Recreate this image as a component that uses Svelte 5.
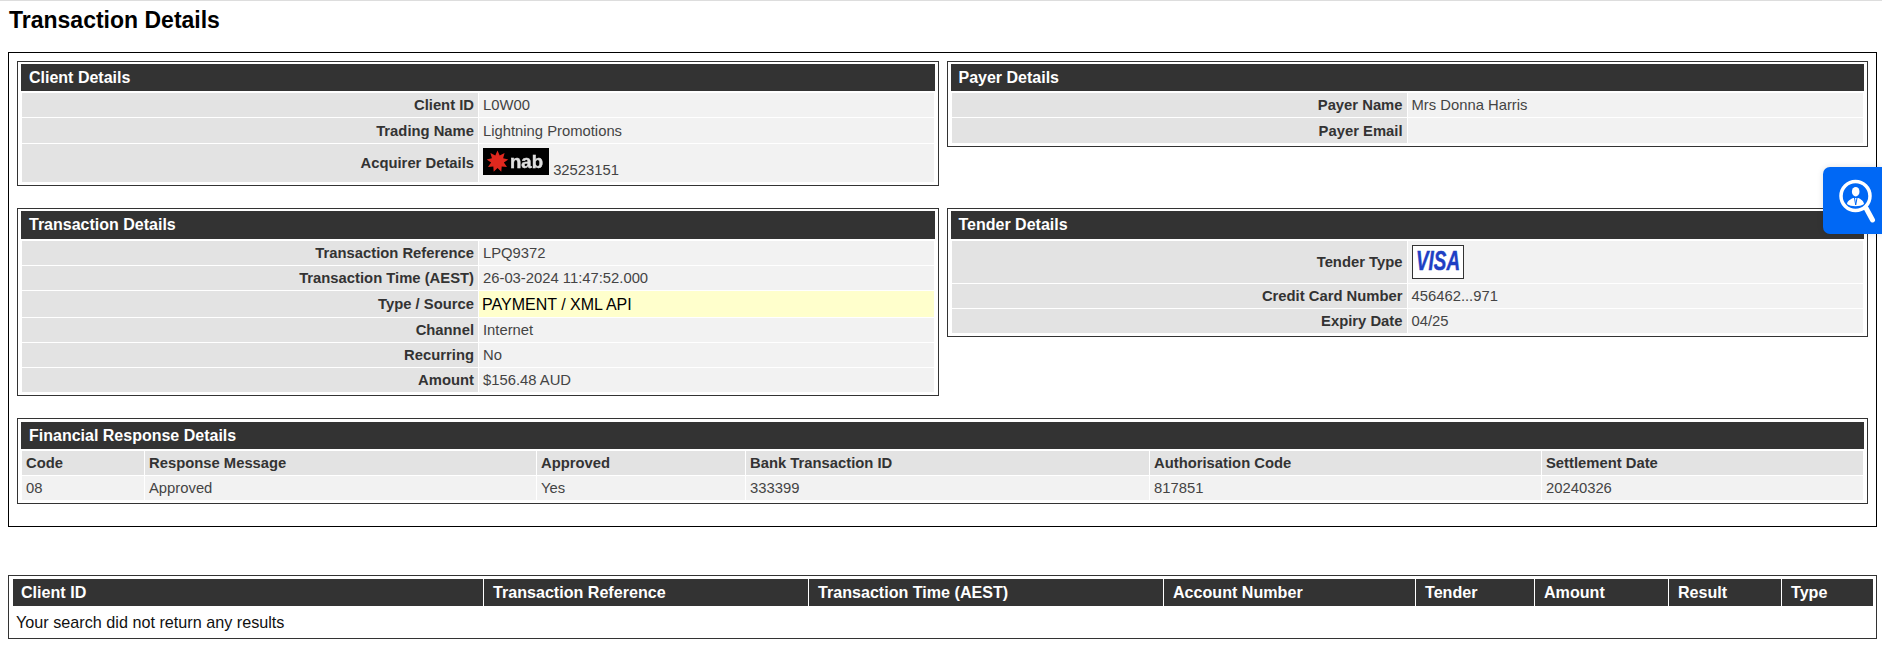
<script lang="ts">
  const client = [
    ['Client ID', 'L0W00'],
    ['Trading Name', 'Lightning Promotions']
  ];
  const payer = [
    ['Payer Name', 'Mrs Donna Harris'],
    ['Payer Email', '']
  ];
  const txn = [
    ['Transaction Reference', 'LPQ9372'],
    ['Transaction Time (AEST)', '26-03-2024 11:47:52.000'],
    ['Type / Source', 'PAYMENT / XML API', 'hl'],
    ['Channel', 'Internet'],
    ['Recurring', 'No'],
    ['Amount', '$156.48 AUD']
  ];
  const tender = [
    ['Credit Card Number', '456462...971'],
    ['Expiry Date', '04/25']
  ];
  const fin = [
    ['Code', '08', 122],
    ['Response Message', 'Approved', 391],
    ['Approved', 'Yes', 208],
    ['Bank Transaction ID', '333399', 403],
    ['Authorisation Code', '817851', 391],
    ['Settlement Date', '20240326', 0]
  ];
  const cols = [
    ['Client ID', 470],
    ['Transaction Reference', 325],
    ['Transaction Time (AEST)', 355],
    ['Account Number', 252],
    ['Tender', 119],
    ['Amount', 134],
    ['Result', 113],
    ['Type', 0]
  ];

  // red nab star
  function star(cx: number, cy: number, R: number, r: number, n: number) {
    const pts = [];
    for (let i = 0; i < n * 2; i++) {
      const a = (Math.PI * i) / n - Math.PI / 2;
      const d = i % 2 ? r : R;
      pts.push((cx + d * Math.cos(a)).toFixed(1) + ',' + (cy + d * Math.sin(a)).toFixed(1));
    }
    return pts.join(' ');
  }
</script>

<div class="page">
  <h1>Transaction Details</h1>

  <div class="outer">
    <div class="split">
      <section class="panel">
        <h2>Client Details</h2>
        <table class="kv pair">
          <tbody>
            {#each client as r}
              <tr><th>{r[0]}</th><td>{r[1]}</td></tr>
            {/each}
            <tr>
              <th class="acq">Acquirer Details</th>
              <td class="logo-cell">
                <svg class="nab" viewBox="0 0 66 27" width="66" height="27">
                  <rect width="66" height="27" fill="#000" />
                  <polygon fill="#e0281e" points={star(14.5, 13.5, 11, 6.5, 9)} />
                  <text x="27" y="20" textLength="33" lengthAdjust="spacingAndGlyphs" class="nab-text">nab</text>
                </svg>
                <span>32523151</span>
              </td>
            </tr>
          </tbody>
        </table>
      </section>

      <section class="panel">
        <h2>Payer Details</h2>
        <table class="kv pair">
          <tbody>
            {#each payer as r}
              <tr><th>{r[0]}</th><td>{r[1]}</td></tr>
            {/each}
          </tbody>
        </table>
      </section>

      <section class="panel">
        <h2 class="tall-head">Transaction Details</h2>
        <table class="kv">
          <tbody>
            {#each txn as r}
              <tr class={r[2]}><th>{r[0]}</th><td>{r[1]}</td></tr>
            {/each}
          </tbody>
        </table>
      </section>

      <section class="panel">
        <h2 class="tall-head">Tender Details</h2>
        <table class="kv">
          <tbody>
            <tr>
              <th class="tall">Tender Type</th>
              <td class="logo-cell">
                <svg class="visa" viewBox="0 0 50 32" width="52" height="34">
                  <text x="3" y="24" textLength="44" lengthAdjust="spacingAndGlyphs" class="visa-text">VISA</text>
                </svg>
              </td>
            </tr>
            {#each tender as r}
              <tr><th>{r[0]}</th><td>{r[1]}</td></tr>
            {/each}
          </tbody>
        </table>
      </section>
    </div>

    <section class="panel wide">
      <h2>Financial Response Details</h2>
      <table class="grid">
        <thead>
          <tr>
            {#each fin as c}
              <th style:width={c[2] ? c[2] + 'px' : null}>{c[0]}</th>
            {/each}
          </tr>
        </thead>
        <tbody>
          <tr>
            {#each fin as c}
              <td>{c[1]}</td>
            {/each}
          </tr>
        </tbody>
      </table>
    </section>
  </div>

  <div class="results">
    <table>
      <thead>
        <tr>
          {#each cols as c}
            <th style:width={c[1] ? c[1] + 'px' : null}>{c[0]}</th>
          {/each}
        </tr>
      </thead>
      <tbody>
        <tr><td colspan="8">Your search did not return any results</td></tr>
      </tbody>
    </table>
  </div>

  <button class="finder" aria-label="Find client">
    <svg viewBox="0 0 59 67" width="59" height="67">
      <circle cx="32.5" cy="29" r="14.5" fill="none" stroke="#fff" stroke-width="3.5" />
      <path d="M43 41 L49.5 53" stroke="#fff" stroke-width="5" stroke-linecap="round" />
      <ellipse cx="32.7" cy="24.7" rx="3.8" ry="4.8" fill="#fff" />
      <path d="M24 37 C24.5 33.5 27.5 32.5 30 31 L35.5 31 C38 32.5 40.5 33.5 41 37 C37 40 28 40 24 37Z" fill="#fff" />
      <path d="M31.5 31 L32.7 38 L34 31" fill="none" stroke="#0068f5" stroke-width="1" />
    </svg>
  </button>
</div>

<style>
  :global(body) {
    margin: 0;
    background: #fff;
  }
  .page {
    position: relative;
    height: 653px;
    overflow: hidden;
    box-sizing: border-box;
    border-top: 1px solid #ddd;
    font-family: "Liberation Sans", Arial, sans-serif;
    font-size: 14.8px;
    color: #333;
  }
  h1 {
    margin: 0;
    padding: 7px 0 0 9px;
    height: 51px;
    box-sizing: border-box;
    font-size: 23px;
    line-height: 25px;
    color: #000;
  }
  .outer {
    margin: 0 5px 0 8px;
    border: 1px solid #000;
    padding: 8px 8px 22px;
  }
  .split {
    display: grid;
    grid-template-columns: 1fr 1fr;
    column-gap: 8px;
    row-gap: 22px;
    align-items: start;
  }
  .panel {
    border: 1px solid #333;
    padding: 2px 3px;
    min-width: 0;
  }
  .wide {
    margin-top: 22px;
    padding-top: 3px;
  }
  h2 {
    margin: 0 0 1px;
    background: #333;
    color: #fff;
    font-size: 16px;
    line-height: 27px;
    height: 27px;
    padding-left: 8px;
  }
  h2.tall-head {
    height: 28px;
    line-height: 28px;
  }
  table {
    width: 100%;
    border-collapse: separate;
    border-spacing: 1px;
    table-layout: fixed;
  }
  .kv th {
    box-sizing: border-box;
    width: 456px;
    background: #e3e3e3;
    text-align: right;
    padding: 0 4px 0 0;
    height: 24px;
    font-weight: bold;
  }
  .split > :nth-child(even) .kv th {
    width: 455px;
  }
  .kv.pair tr:nth-child(2) th {
    height: 25px;
  }
  .kv th.acq {
    height: 38px;
  }
  .kv th.tall {
    height: 42px;
  }
  .kv td {
    background: #f2f2f2;
    padding: 0 0 0 4px;
    height: 24px;
    color: #444;
  }
  .kv tr.hl th {
    height: 26px;
  }
  .kv tr.hl td {
    background: #ffffcc;
    color: #000;
    font-size: 16px;
    padding: 2px 0 0 3px;
    box-sizing: border-box;
  }
  .kv td.logo-cell {
    padding: 4px 0 0 4px;
    line-height: 17px;
    vertical-align: top;
  }
  .nab {
    display: inline-block;
    vertical-align: baseline;
    filter: blur(0.4px);
  }
  .nab-text {
    font-family: "Liberation Sans", sans-serif;
    font-size: 19px;
    font-weight: bold;
    fill: #e0e0e0;
    stroke: #e0e0e0;
    stroke-width: 0.4;
  }
  .visa {
    display: block;
    box-sizing: border-box;
    border: 1px solid #333;
    background: #fff;
    margin-bottom: 3px;
  }
  .visa-text {
    font-family: "Liberation Sans", sans-serif;
    font-weight: bold;
    font-style: italic;
    font-size: 28px;
    fill: #1e3fc4;
    stroke: #1e3fc4;
    stroke-width: 0.5;
  }
  .grid th {
    box-sizing: border-box;
    background: #e3e3e3;
    text-align: left;
    height: 24px;
    padding: 0 0 0 4px;
  }
  .grid td {
    background: #f2f2f2;
    height: 24px;
    padding: 0 0 0 4px;
    color: #444;
  }
  .results {
    margin: 48px 5px 0 8px;
    border: 1px solid #333;
    padding: 3px 3px 0 4px;
    font-size: 16.1px;
  }
  .results table {
    border-spacing: 0;
  }
  .results th {
    box-sizing: border-box;
    background: #333;
    color: #fff;
    text-align: left;
    height: 27px;
    padding: 0 0 0 9px;
    border-left: 1px solid #fff;
  }
  .results th:first-child {
    border-left: 0;
    padding-left: 8px;
  }
  .results td {
    height: 32px;
    padding: 0 0 0 3px;
    font-size: 16.2px;
    color: #111;
  }
  .finder {
    position: absolute;
    left: 1823px;
    top: 166px;
    width: 59px;
    height: 67px;
    border: 0;
    padding: 0;
    background: #0068f5;
    border-radius: 7px 0 0 7px;
    box-shadow: 0 0 6px rgba(0, 0, 0, 0.12);
  }
  .finder svg {
    display: block;
  }
</style>
